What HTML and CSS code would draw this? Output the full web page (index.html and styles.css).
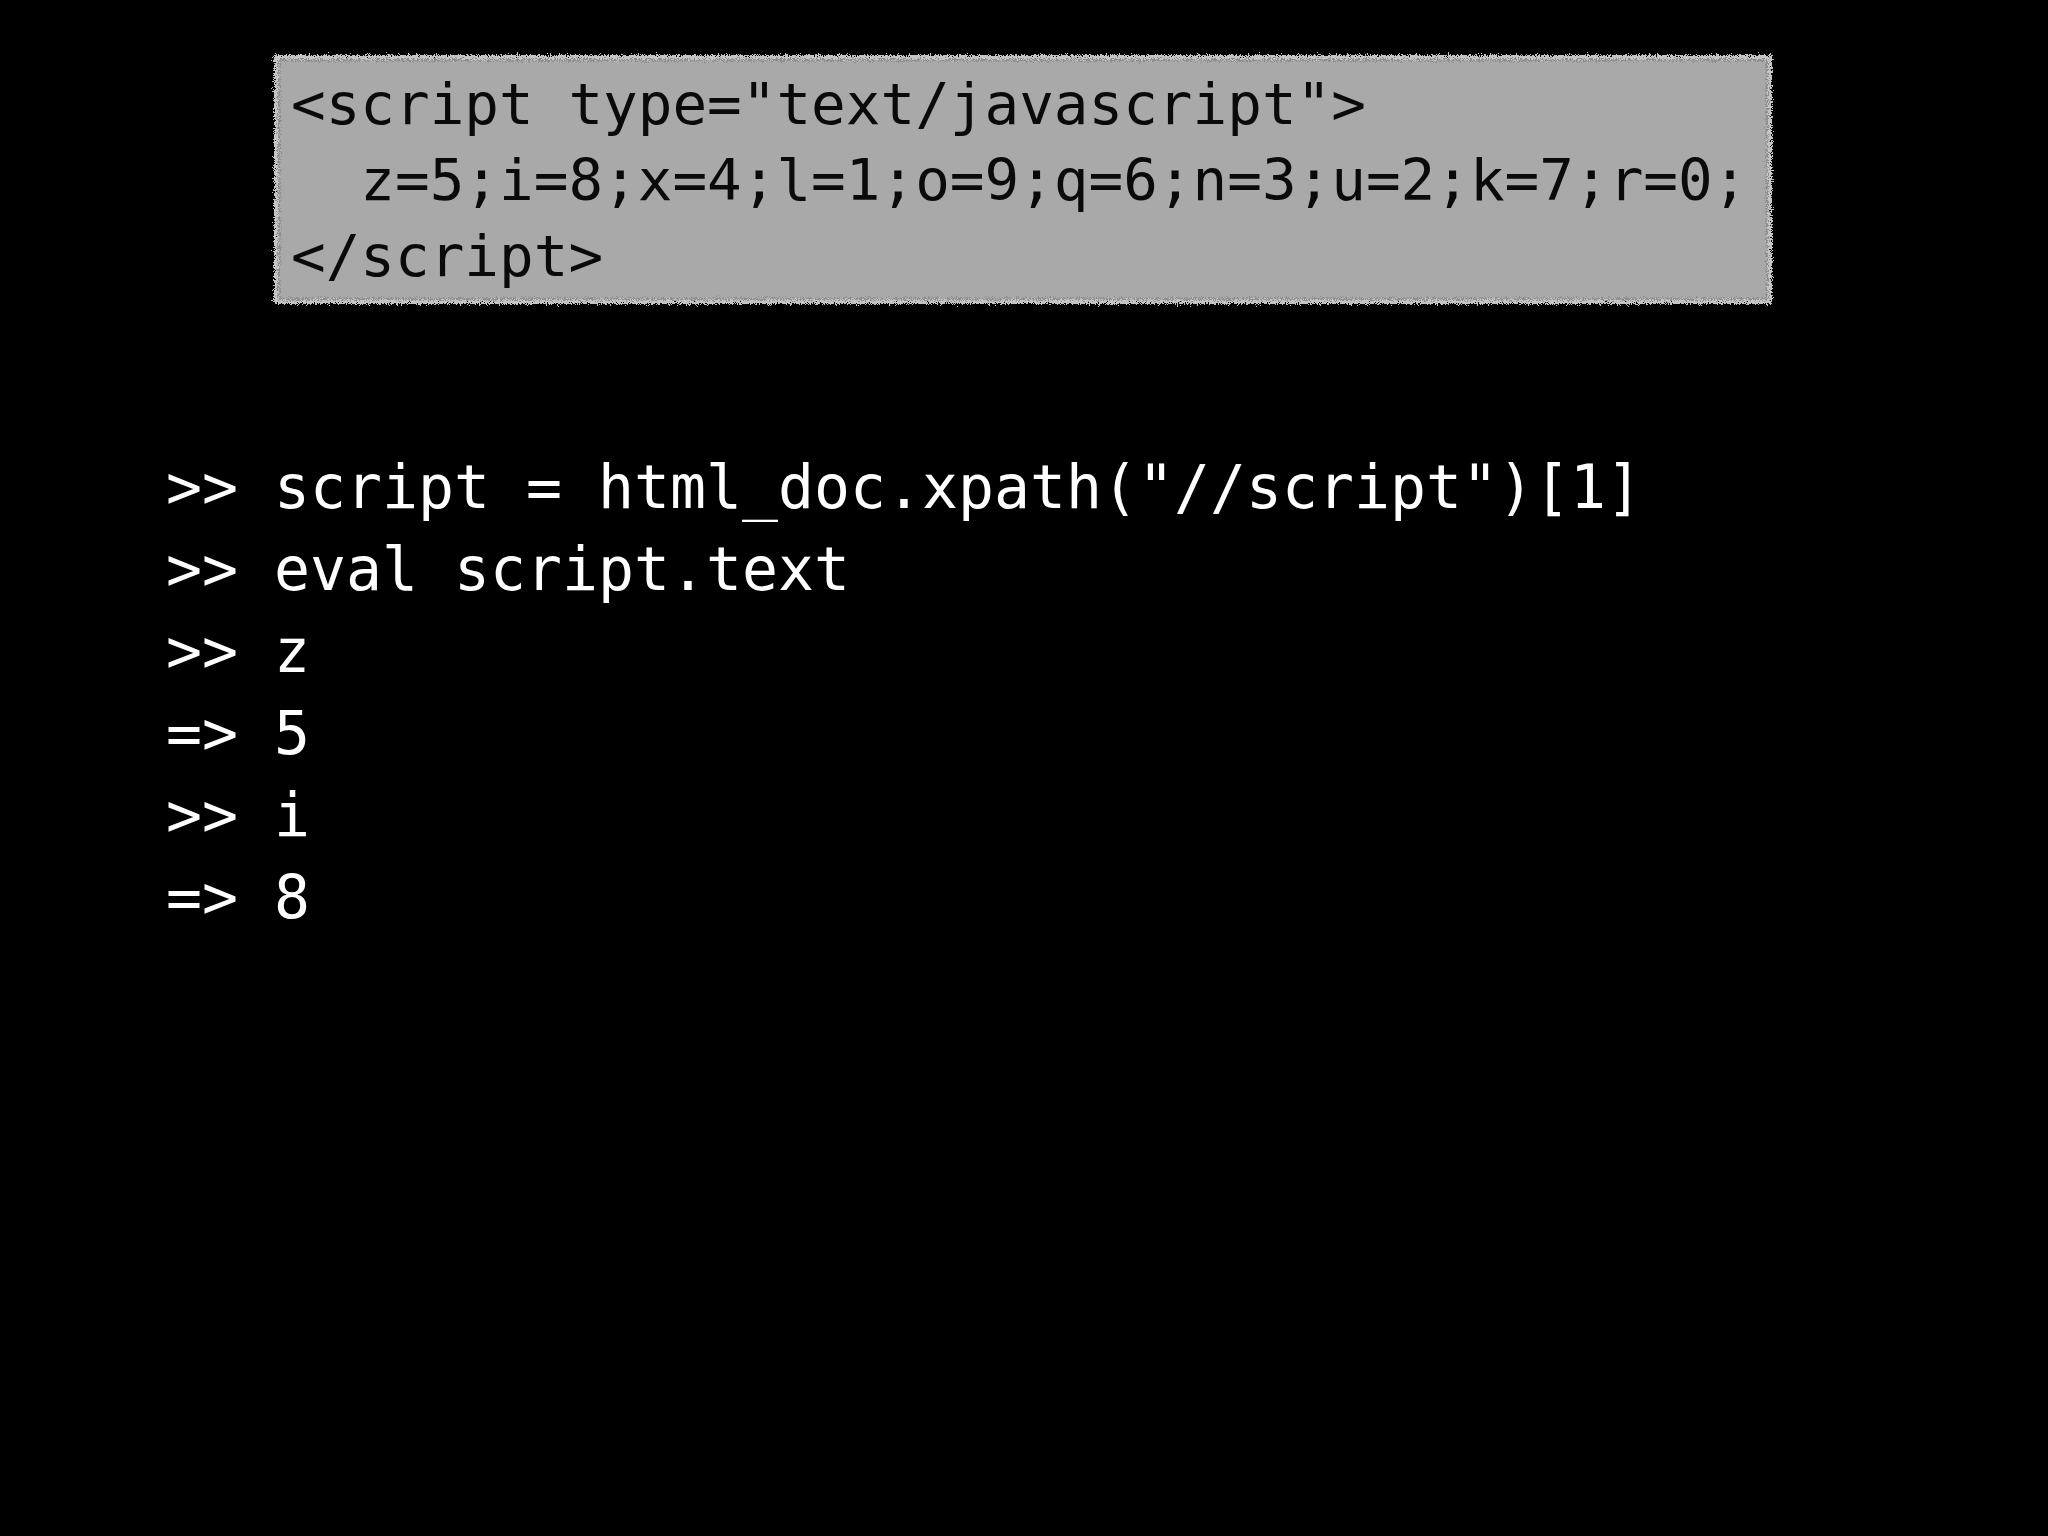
FILE: index.html
```html
<!DOCTYPE html>
<html lang="en">
<head>
<meta charset="utf-8">
<title>script eval</title>
<link rel="stylesheet" href="styles.css">
</head>
<body>
<svg class="defs" width="0" height="0" aria-hidden="true">
  <filter id="rough" x="-2%" y="-5%" width="104%" height="110%">
    <feTurbulence type="fractalNoise" baseFrequency="1.1" numOctaves="2" seed="3" result="noise"/>
    <feDisplacementMap in="SourceGraphic" in2="noise" scale="9" xChannelSelector="R" yChannelSelector="G"/>
  </filter>
</svg>
<main class="slide">
  <pre class="codebox">&lt;script type="text/javascript"&gt;
  z=5;i=8;x=4;l=1;o=9;q=6;n=3;u=2;k=7;r=0;
&lt;/script&gt;</pre>
  <pre class="console">&gt;&gt; script = html_doc.xpath("//script")[1]
&gt;&gt; eval script.text
&gt;&gt; z
=&gt; 5
&gt;&gt; i
=&gt; 8</pre>
</main>
</body>
</html>
```
FILE: styles.css
```css
html, body {
  margin: 0;
  padding: 0;
  background: #000;
}

.defs {
  position: absolute;
  width: 0;
  height: 0;
}

.slide {
  width: 2048px;
  height: 1536px;
  background: #000;
  display: flex;
  flex-direction: column;
  align-items: flex-start;
  overflow: hidden;
}

.codebox {
  position: relative;
  z-index: 0;
  margin: 55px 0 0 274px;
  width: 1498px;
  height: 249px;
  box-sizing: border-box;
  padding: 12px 0 0 17px;
  font-family: "DejaVu Sans Mono", "Liberation Mono", monospace;
  font-size: 57.6px;
  line-height: 76px;
  color: #0a0a0a;
  white-space: pre;
}

.codebox::before {
  content: "";
  position: absolute;
  inset: 0;
  z-index: -1;
  background: #a9a9a9;
  box-shadow: inset 0 0 0 4px #c4c4c4, inset 0 0 0 6px #8e8e8e;
  filter: url(#rough);
}

.console {
  margin: 142px 0 0 166px;
  font-family: "DejaVu Sans Mono", "Liberation Mono", monospace;
  font-size: 59.8px;
  line-height: 82px;
  color: #fff;
  white-space: pre;
}
```
